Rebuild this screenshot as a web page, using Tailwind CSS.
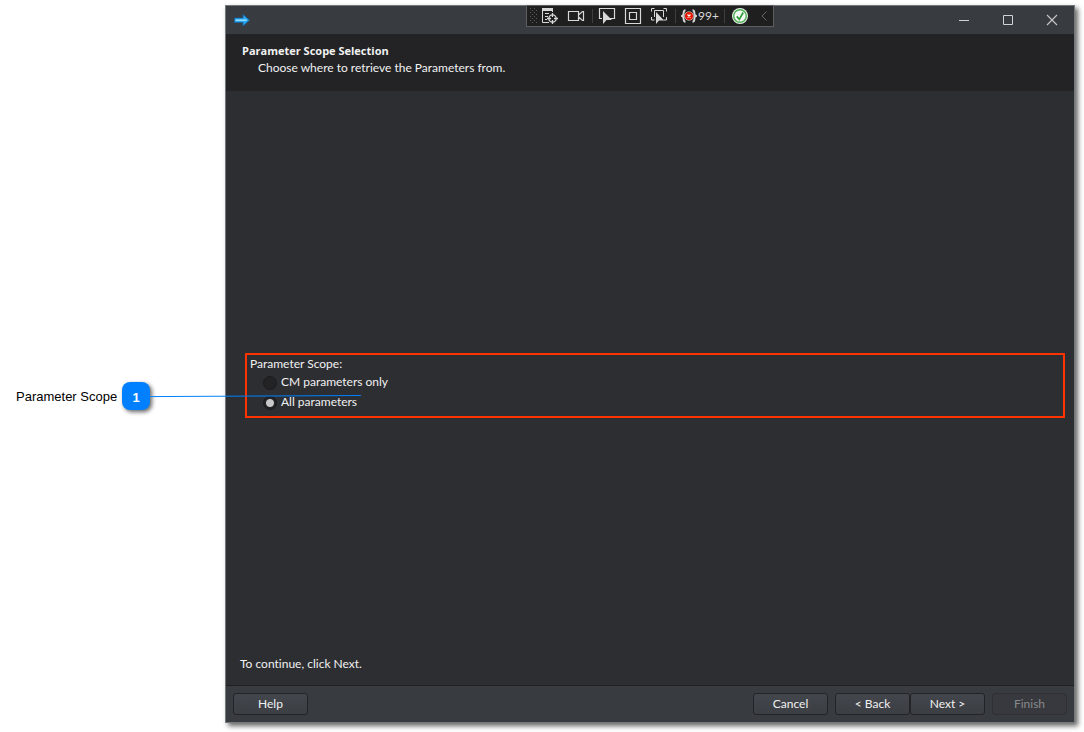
<!DOCTYPE html>
<html lang="en">
<head>
<meta charset="utf-8">
<meta name="viewport" content="width=device-width, initial-scale=1">
<title>Parameter Scope Selection</title>
<script src="https://cdn.jsdelivr.net/npm/@tailwindcss/browser@4"></script>
</head>
<body class="bg-white">
<main class="flex min-h-screen pt-[5px] pr-[9px] pb-[9px]">

  <!-- Callout -->
  <aside class="w-[225px] shrink-0 pt-[377px] pl-4 flex items-start gap-[5px] font-['Liberation_Sans',Arial,sans-serif] text-[13px] text-black">
    <span class="leading-[30px] w-[101px] whitespace-nowrap">Parameter Scope</span>
    <span class="relative w-7 h-7 rounded-lg bg-[#0080ff] shadow-[2px_2px_4px_rgba(0,0,0,0.6)] text-white font-bold text-center leading-[32px]">1
      <svg class="absolute left-7 top-3 z-10 w-[211px] h-1" viewBox="0 0 211 4" aria-hidden="true"><path d="M0 2.600L211 1.500" stroke="#0080ff" stroke-width="1"/></svg>
    </span>
  </aside>

  <!-- Wizard window -->
  <section class="flex-1 min-w-0 flex flex-col border border-[#74797b] bg-[#2d2e32] shadow-[3px_3px_5px_rgba(0,0,0,0.6)] font-[Lato,'Open_Sans',sans-serif] [font-variant-ligatures:none] text-[12px] text-[#f1f1f1]">
    <header class="relative h-7 bg-[#383b40] flex items-center justify-between pl-2">
      <svg class="w-4 h-4" viewBox="0 0 16 16" aria-hidden="true"><path d="M.5 6h8.500V2.500l6.500 5.700L9 14v-3.500H.5z" fill="#2aa5ee" stroke="#14619e" stroke-width=".8"/><path d="M1.500 8.200h11" stroke="#8fdcff" stroke-width="1.600"/></svg>
      <div class="flex h-full">
        <button aria-label="Minimize" class="w-11 flex items-center justify-center"><svg class="w-3 h-3" viewBox="0 0 12 12"><path d="M1 6.500h10" stroke="#d0d2d4"/></svg></button>
        <button aria-label="Maximize" class="w-11 flex items-center justify-center"><svg class="w-3 h-3" viewBox="0 0 12 12"><path d="M1.500 1.500h9v9h-9z" fill="none" stroke="#d0d2d4"/></svg></button>
        <button aria-label="Close" class="w-11 flex items-center justify-center"><svg class="w-3 h-3" viewBox="0 0 12 12"><path d="M1 1l10 10M11 1L1 11" stroke="#c6c8ca" stroke-width="1.100"/></svg></button>
      </div>

      <!-- Debug toolbar, floating over the title bar -->
      <div class="absolute left-1/2 -translate-x-1/2 -top-px w-[248px] h-[22px] bg-[#1f1f1f] border border-[#5c5e5f] flex items-center pl-[3px] text-[#d8d8d8]">
        <svg class="w-[7px] h-[18px]" viewBox="0 0 7 18" fill="#5a5a5a" aria-hidden="true"><path d="M0 1h1v1H0zM4 1h1v1H4zM2 3h1v1H2zM6 3h1v1H6zM0 5h1v1H0zM4 5h1v1H4zM2 7h1v1H2zM6 7h1v1H6zM0 9h1v1H0zM4 9h1v1H4zM2 11h1v1H2zM6 11h1v1H6zM0 13h1v1H0zM4 13h1v1H4zM2 15h1v1H2zM6 15h1v1H6z"/></svg>
        <button aria-label="Live visual tree" class="ml-1"><svg class="w-[18px] h-[18px]" viewBox="0 0 18 18" fill="none" stroke="currentColor"><path d="M1 1h11v3H1z" fill="currentColor" stroke="none"/><path d="M1.500 3v12.500H8M11.500 3v2M4 6.500h4M4 9.500h3M4 12.500h2"/><circle cx="11.500" cy="11.500" r="3.700" stroke-width="1.300"/><path d="M11.500 6v4M11.500 13v4M6 11.500h4M13 11.500h4" stroke-width="1.300"/></svg></button>
        <button aria-label="Record" class="ml-[8px]"><svg class="w-[18px] h-[18px]" viewBox="0 0 18 18" fill="none" stroke="currentColor" stroke-width="1.200"><path d="M1.500 4.500h10v9h-10zM11.500 8l4-3.500h1v9h-1l-4-3.500"/></svg></button>
        <span class="ml-[7px] w-px h-[14px] bg-[#3e3e3e]"></span>
        <button aria-label="Select element" class="ml-[5px]"><svg class="w-[18px] h-[18px]" viewBox="0 0 18 18" fill="none" stroke="currentColor"><path d="M4 11.500H1.500v-10h15v10H12" stroke-width="1.200"/><path d="M5 4v13l3.500-4H14z" fill="currentColor" stroke="none"/></svg></button>
        <button aria-label="Display layout adorners" class="ml-[8px]"><svg class="w-[18px] h-[18px]" viewBox="0 0 18 18" fill="none" stroke="currentColor" stroke-width="1.200"><path d="M1.500 1.500h15v15h-15zM5.500 5.500h7v7h-7z"/></svg></button>
        <button aria-label="Track focused element" class="ml-[8px]"><svg class="w-[18px] h-[18px]" viewBox="0 0 18 18" fill="none" stroke="currentColor"><path d="M1.500 4.500v-3h3M13.500 1.500h3v3M1.500 10v3h3M16.500 10v3h-3M4.500 10V3.500h9V10"/><path d="M6 5v12l3-3.500h5z" fill="currentColor" stroke="none"/></svg></button>
        <span class="ml-[7px] w-px h-[14px] bg-[#3e3e3e]"></span>
        <button aria-label="99+ binding failures" class="ml-[5px] flex items-center gap-px"><svg class="w-4 h-[18px]" viewBox="0 0 16 18" fill="none" stroke="currentColor"><path d="M4.500 3.200C2 3.200 2.800 6 2.500 7.700L1 9l1.500 1.300c.3 1.700-.5 4.500 2 4.500M11.500 3.200c2.500 0 1.700 2.800 2 4.500L15 9l-1.500 1.300c-.3 1.700.5 4.500-2 4.500" stroke-width="1.900"/><circle cx="8" cy="9" r="4.600" fill="#e8e8e8" stroke="none"/><circle cx="8" cy="9" r="4" fill="#e51400" stroke="none"/><path d="M6.500 7.500l3 3M9.500 7.500l-3 3" stroke="#fff" stroke-width="1.200"/></svg><span class="w-5 leading-[18px]">99+</span></button>
        <span class="ml-[6px] w-px h-[14px] bg-[#3e3e3e]"></span>
        <button aria-label="Hot reload ready" class="ml-[6px]"><svg class="w-[18px] h-[18px]" viewBox="0 0 18 18" fill="none"><circle cx="9" cy="9" r="8" fill="#e8efe8"/><circle cx="9" cy="9" r="6.300" fill="#f4f8f4" stroke="#4fae54" stroke-width="1.400"/><path d="M5.800 9.400l2.500 2.900L12.200 5.500" stroke="#2f9a38" stroke-width="1.700"/></svg></button>
        <button aria-label="Collapse toolbar" class="ml-[10px]"><svg class="w-[10px] h-[18px]" viewBox="0 0 10 18" fill="none"><path d="M7.500 4.500L3 9l4.500 4.500" stroke="#666"/></svg></button>
      </div>
    </header>

    <div class="h-[57px] bg-[#232325] pl-4 pt-2 leading-[17px]">
      <h1 class="font-['Open_Sans',sans-serif] text-[11px] font-bold">Parameter Scope Selection</h1>
      <p class="pl-4">Choose where to retrieve the Parameters from.</p>
    </div>

    <div class="flex-1 flex flex-col pt-[262px] pb-3">
      <div role="radiogroup" aria-labelledby="scope" class="ml-[19px] mr-[9px] border-2 border-[#ff3300] pl-[3px] pb-[3px]">
        <p id="scope" class="h-[18px] leading-[18px]">Parameter Scope:</p>
        <label class="flex items-center h-5 pl-[13px] gap-1 leading-[18px]"><input type="radio" name="scope" class="appearance-none w-[14px] h-[14px] rounded-full bg-[#232325] border border-[#1c1c1e] checked:bg-[radial-gradient(circle,#c8c8c8_3.5px,#232325_4.5px)]"><span class="pb-[2px]">CM parameters only</span></label>
        <label class="flex items-center h-5 pl-[13px] gap-1 leading-[18px]"><input type="radio" name="scope" checked class="appearance-none w-[14px] h-[14px] rounded-full bg-[#232325] border border-[#1c1c1e] checked:bg-[radial-gradient(circle,#c8c8c8_3.5px,#232325_4.5px)]"><span class="pb-[2px]">All parameters</span></label>
      </div>
      <p class="mt-auto pl-[14px] leading-[18px]">To continue, click Next.</p>
    </div>

    <footer class="h-[37px] border-t border-[#1f2022] bg-[#383b40] flex items-center px-[7px]">
      <button class="w-[75px] h-[22px] rounded-[3px] border border-[#232427] bg-linear-to-b from-[#43464c] to-[#3b3e43] leading-[20px]">Help</button>
      <button class="ml-auto w-[75px] h-[22px] rounded-[3px] border border-[#232427] bg-linear-to-b from-[#43464c] to-[#3b3e43] leading-[20px]">Cancel</button>
      <button class="ml-[7px] w-[75px] h-[22px] rounded-[3px] border border-[#232427] bg-linear-to-b from-[#43464c] to-[#3b3e43] leading-[20px]">&lt; Back</button>
      <button class="w-[75px] h-[22px] rounded-[3px] border border-[#232427] bg-linear-to-b from-[#43464c] to-[#3b3e43] leading-[20px]">Next &gt;</button>
      <button disabled class="ml-[7px] w-[75px] h-[22px] rounded-[3px] border border-[#2e3033] bg-[#38393e] text-[#88898c] leading-[20px]">Finish</button>
    </footer>
  </section>
</main>
</body>
</html>
